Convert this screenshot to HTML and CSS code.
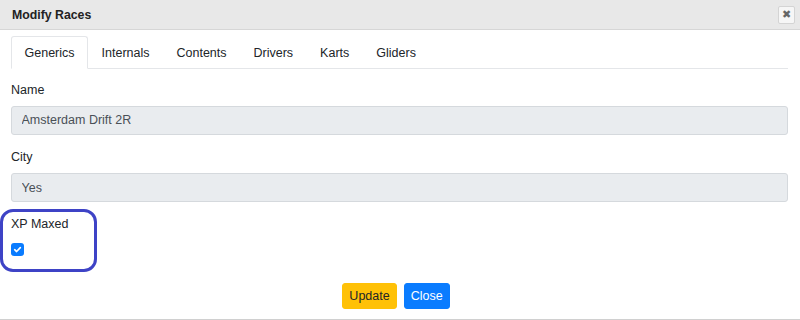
FILE: index.html
```html
<!DOCTYPE html>
<html>
<head>
  <title>Modify Races</title>
  <link rel="stylesheet" href="styles.css">
</head>
<body>
  <div class="modal">
    <div class="modal-header">
      <h1>Modify Races</h1>
      <button type="button" class="close-x">&#10006;</button>
    </div>

    <div class="modal-body">
      <ul class="nav-tabs">
        <li class="active">Generics</li>
        <li>Internals</li>
        <li>Contents</li>
        <li>Drivers</li>
        <li>Karts</li>
        <li>Gliders</li>
      </ul>

      <form class="tab-content">
        <div class="form-group">
          <label for="name">Name</label>
          <input type="text" id="name" value="Amsterdam Drift 2R" disabled>
        </div>
        <div class="form-group">
          <label for="city">City</label>
          <input type="text" id="city" value="Yes" disabled>
        </div>
        <div class="form-group xp">
          <label for="xp">XP Maxed</label>
          <div class="check-row"><span class="check">
            <svg width="9" height="9" viewBox="0 0 8 8"><path d="M1.5 4.2 L3.2 5.8 L6.5 2.3" fill="none" stroke="#fff" stroke-width="1.5" stroke-linecap="round" stroke-linejoin="round"/></svg>
          </span></div>
          <div class="highlight"></div>
        </div>
      </form>

      <div class="modal-footer">
        <button type="button" class="btn btn-update">Update</button>
        <button type="button" class="btn btn-close">Close</button>
      </div>
    </div>
  </div>
</body>
</html>
```

FILE: styles.css
```css
body {
  font-family: "Liberation Sans", Arial, sans-serif;
  font-size: 12.5px;
  color: #212529;
  margin: 0;
  padding: 0;
  background: #fff;
}

.modal {
  height: 319px;
  border-bottom: 1px solid #d0d0d0;
}

/* header bar */
.modal-header {
  height: 29px;
  background-color: #e8e8e8;
  border-bottom: 1px solid #d6d6d6;
  display: flex;
  align-items: center;
  justify-content: space-between;
  padding: 0 5px 0 12px;
}

.modal-header h1 {
  font-size: 12.3px;
  font-weight: bold;
  margin: 0;
  color: #222;
}

.close-x {
  width: 17px;
  height: 18px;
  padding: 0;
  border: 1px solid #d4d4d4;
  border-radius: 2px;
  background: #f6f6f6;
  color: #666;
  font-size: 11px;
  line-height: 16px;
  text-align: center;
  font-family: "DejaVu Sans", sans-serif;
}

.modal-body {
  padding: 6px 12px 0 11px;
}

/* tabs */
.nav-tabs {
  list-style-type: none;
  margin: 0;
  padding: 0;
  display: flex;
  border-bottom: 1px solid #e4e6e9;
}

.nav-tabs li {
  padding: 7px 12.5px 5px;
  line-height: 18.75px;
  border: 1px solid transparent;
  border-radius: 3px 3px 0 0;
  margin-bottom: -1px;
  color: #212529;
}

.nav-tabs li.active {
  border-color: #e4e6e9 #e4e6e9 #fff;
  background: #fff;
}

.tab-content {
  padding-top: 12px;
}

.form-group {
  margin-bottom: 12.5px;
}

label {
  display: block;
  line-height: 18.75px;
  margin-bottom: 6.2px;
}

input[type="text"] {
  display: block;
  width: 100%;
  box-sizing: border-box;
  height: 29.6px;
  padding: 0 9.5px;
  font-family: inherit;
  font-size: 12.5px;
  color: #495057;
  background-color: #e9ecef;
  border: 1px solid #d5d9dd;
  border-radius: 3px;
  margin: 0;
}

.xp {
  position: relative;
}

.check-row {
  height: 18.75px;
  display: flex;
  align-items: center;
}

.check {
  width: 13px;
  height: 13px;
  box-sizing: border-box;
  border-radius: 3px;
  background: #0a7cff;
  display: flex;
  align-items: center;
  justify-content: center;
}

/* annotation ring drawn over the checkbox field */
.highlight {
  position: absolute;
  left: -11px;
  top: -6px;
  width: 91px;
  height: 57px;
  border: 3px solid #3e43c6;
  border-radius: 13px;
}

.modal-footer {
  display: flex;
  justify-content: center;
  gap: 7px;
  padding: 12px 7px 0 0;
}

.btn {
  font-family: inherit;
  font-size: 12.5px;
  line-height: 18px;
  padding: 3px 6px;
  border: 1px solid transparent;
  border-radius: 3px;
  cursor: pointer;
}

.btn-update {
  background-color: #ffc107;
  border-color: #ffc107;
  color: #212529;
}

.btn-close {
  background-color: #0a7cff;
  border-color: #0a7cff;
  color: #fff;
}
```
